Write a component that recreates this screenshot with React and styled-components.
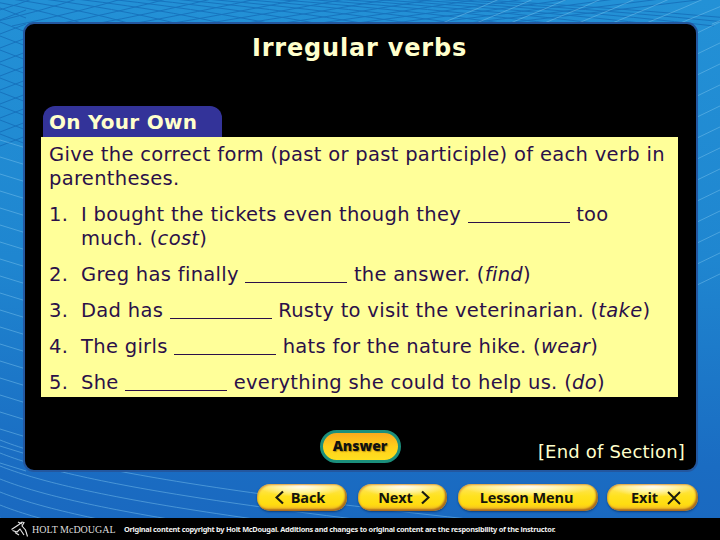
import styled, { createGlobalStyle } from "styled-components";

const GlobalStyle = createGlobalStyle`
  html, body {
    margin: 0;
    padding: 0;
    background: #000;
  }
  body {
    font-family: "DejaVu Sans", Verdana, sans-serif;
  }
`;

const questions = [
  {
    id: 1,
    lines: [
      <>I bought the tickets even though they <Blank /> too</>,
      <>much. (<em>cost</em>)</>,
    ],
  },
  { id: 2, lines: [<>Greg has finally <Blank /> the answer. (<em>find</em>)</>] },
  { id: 3, lines: [<>Dad has <Blank /> Rusty to visit the veterinarian. (<em>take</em>)</>] },
  { id: 4, lines: [<>The girls <Blank /> hats for the nature hike. (<em>wear</em>)</>] },
  { id: 5, lines: [<>She <Blank /> everything she could to help us. (<em>do</em>)</>] },
];

function Blank() {
  return <BlankLine />;
}

const BackgroundLines = () => {
  const light = [];
  // long sweeping lines under the panel
  for (let i = 0; i < 11; i++) {
    const y = 440 + i * 13;
    light.push(`M0 ${y} C 70 ${y + 28}, 240 ${y + 60}, 720 ${y + 104}`);
  }
  // rays in the top right corner and down the right edge
  for (let i = 0; i < 14; i++) {
    const x = 440 + i * 34;
    light.push(`M${x} 24 Q ${x + 40} 8, ${x + 80} -10`);
  }
  for (let i = 0; i < 13; i++) {
    const y = 34 + i * 21;
    light.push(`M695 ${y} L 722 ${y - 13}`);
  }
  for (let i = 0; i < 20; i++) {
    const y = 140 + i * 17;
    light.push(`M0 ${y} L 26 ${y + 8}`);
  }

  const dark = [];
  // mesh along the top and left
  for (let i = 0; i < 16; i++) {
    dark.push(`M${i * 36 - 60} 26 Q ${i * 40} 12, ${i * 46 + 40} -4`);
    dark.push(`M${i * 30 - 40} -4 Q ${i * 40 + 40} 8, ${i * 48 + 90} 26`);
  }
  for (let i = 0; i < 10; i++) {
    dark.push(`M0 ${i * 14 + 20} L 26 ${i * 14 + 10}`);
    dark.push(`M0 ${i * 14 + 8} L 26 ${i * 14 + 18}`);
  }

  return (
    <LinesSvg viewBox="0 0 720 518">
      <defs>
        <radialGradient id="topShade" cx="0.5" cy="0" r="0.5">
          <stop offset="0" stopColor="#0f5fae" stopOpacity="0.95" />
          <stop offset="1" stopColor="#0f5fae" stopOpacity="0" />
        </radialGradient>
      </defs>
      <ellipse cx="330" cy="0" rx="280" ry="18" fill="url(#topShade)" />
      <g fill="none" stroke="#146ab6" strokeWidth="1" opacity="0.75">
        {dark.map((d) => <path key={d} d={d} />)}
      </g>
      <g fill="none" stroke="#7cc4ee" strokeWidth="0.8" opacity="0.6">
        {light.map((d) => <path key={d} d={d} />)}
      </g>
    </LinesSvg>
  );
};

const Chevron = ({ dir }) => (
  <svg width="9" height="15" viewBox="0 0 9 15">
    <path
      d={dir === "left" ? "M8 1.5 L1.5 7.5 L8 13.5" : "M1 1.5 L7.5 7.5 L1 13.5"}
      fill="none"
      stroke="#1a1a10"
      strokeWidth="2.2"
    />
  </svg>
);

const CrossIcon = () => (
  <svg width="14" height="14" viewBox="0 0 14 14">
    <path d="M1 1 L13 13 M13 1 L1 13" fill="none" stroke="#1a1a10" strokeWidth="1.9" />
  </svg>
);

const LogoMark = () => (
  <svg width="18" height="17" viewBox="0 0 18 17">
    <g fill="none" stroke="#e8e8e8" strokeWidth="1.1">
      <path d="M0.5 8.5 L8 3.5 L11 1 L13 1.5 L11 5 L14.5 9 L16.5 15.5" />
      <path d="M1.5 9.5 L6 11 L9 8 L13 14" />
      <path d="M7 1 L11 3" />
      <path d="M4 11.5 L8 14" />
    </g>
  </svg>
);

export default function App() {
  return (
    <>
      <GlobalStyle />
      <Page>
        <Stage>
          <BackgroundLines />
          <Panel>
            <Title>Irregular verbs</Title>
            <Tab>On Your Own</Tab>
            <Card>
              <Intro>
                Give the correct form (past or past participle) of each verb in parentheses.
              </Intro>
              {questions.map((q) => (
                <Question key={q.id}>
                  <Number>{q.id}.</Number>
                  <div>
                    {q.lines.map((line, i) => (
                      <QuestionLine key={i}>{line}</QuestionLine>
                    ))}
                  </div>
                </Question>
              ))}
            </Card>
            <PanelFooter>
              <AnswerButton>Answer</AnswerButton>
              <EndNote>[End of Section]</EndNote>
            </PanelFooter>
          </Panel>
          <NavBar>
            <NavButton $width={90} $inset="0 4px 0 0" $gap={7}><Chevron dir="left" /> Back</NavButton>
            <NavButton $width={89} $inset="0 0 0 3px"  $gap={8}>Next <Chevron dir="right" /></NavButton>
            <NavButton $width={140} $inset="0 3px 0 0">Lesson Menu</NavButton>
            <NavButton $width={91} $pull={2} $inset="0 0 0 7px">Exit <CrossIcon /></NavButton>
          </NavBar>
        </Stage>
        <Footer>
          <LogoMark />
          <Brand>HOLT McDOUGAL</Brand>
          <Legal>
            Original content copyright by Holt McDougal. Additions and changes to original content are the responsibility of the instructor.
          </Legal>
        </Footer>
      </Page>
    </>
  );
}

const Page = styled.div`
  width: 720px;
  height: 540px;
  display: flex;
  flex-direction: column;
  overflow: hidden;
`;

const Stage = styled.div`
  position: relative;
  height: 518px;
  box-sizing: border-box;
  padding: 22px 22px 0 23px;
  background: linear-gradient(180deg, #2391d6 0%, #1f86d0 50%, #1a6cc2 90%, #1a69c0 100%);
`;

const LinesSvg = styled.svg`
  position: absolute;
  inset: 0;
  width: 100%;
  height: 100%;
`;

const Panel = styled.div`
  position: relative;
  box-sizing: border-box;
  width: 675px;
  height: 450px;
  padding: 0 18px 0 16px;
  background: #000;
  border: 2px solid #23579f;
  border-radius: 11px;
`;

const Title = styled.h1`
  margin: 0;
  height: 82px;
  padding-top: 9px;
  box-sizing: border-box;
  text-align: center;
  font-size: 24px;
  line-height: 30px;
  font-weight: 700;
  letter-spacing: 0.8px;
  color: #ffffcc;
`;

const Tab = styled.div`
  box-sizing: border-box;
  width: 179px;
  height: 31px;
  margin-left: 2px;
  padding: 3px 0 0 6px;
  background: #333399;
  border-radius: 12px 12px 0 0;
  font-size: 20px;
  line-height: 27px;
  font-weight: 700;
  letter-spacing: 0.25px;
  color: #ffffcc;
`;

const Card = styled.div`
  box-sizing: border-box;
  width: 637px;
  height: 260px;
  padding: 6px 8px 0;
  background: #ffff99;
  color: #2b1049;
  font-size: 19.5px;
  line-height: 24px;
  letter-spacing: 0.31px;
`;

const Intro = styled.p`
  margin: 0 0 12px;
`;

const Question = styled.div`
  display: flex;
  margin-bottom: 12px;
`;

const Number = styled.span`
  flex: 0 0 32px;
`;

const QuestionLine = styled.div`
  white-space: nowrap;
`;

const BlankLine = styled.span`
  display: inline-block;
  width: 102px;
  height: 17px;
  margin-bottom: -2px;
  border-bottom: 1px solid #2b1049;
  vertical-align: baseline;
`;

const PanelFooter = styled.div`
  position: relative;
  display: flex;
  justify-content: center;
  padding-top: 33px;
`;

const AnswerButton = styled.button`
  box-sizing: border-box;
  width: 81px;
  height: 33px;
  margin-left: 1px;
  padding: 0 0 2px;
  border: 3px solid #1b8f7c;
  border-radius: 17px;
  background: linear-gradient(180deg, #f9a91e 0%, #ffcf1a 50%, #ffe020 100%);
  font-family: "Open Sans", sans-serif;
  font-size: 14px;
  font-weight: 800;
  color: #111;
  text-shadow: 1px 1px 1px rgba(120, 80, 0, 0.5);
`;

const EndNote = styled.div`
  position: absolute;
  right: -7px;
  top: 43px;
  font-size: 18px;
  line-height: 24px;
  letter-spacing: 0.2px;
  color: #ffffcc;
  white-space: nowrap;
`;

const NavBar = styled.div`
  position: relative;
  display: flex;
  gap: 11px;
  margin-top: 12px;
  margin-left: 234px;
`;

const NavButton = styled.button`
  display: flex;
  align-items: center;
  justify-content: center;
  gap: ${(props) => props.$gap || 9}px;
  box-sizing: border-box;
  width: ${(props) => props.$width}px;
  height: 27px;
  margin-left: ${(props) => -(props.$pull || 0)}px;
  padding: ${(props) => props.$inset || 0};
  border: none;
  border-radius: 13px;
  background:
    radial-gradient(ellipse 48% 42% at 50% 6%, #ffffff 0%, rgba(255, 250, 200, 0.7) 55%, rgba(255, 248, 190, 0) 100%),
    linear-gradient(180deg, #ffe56a 0%, #ffe21f 45%, #ffdc10 75%, #f2b52a 100%);
  box-shadow: inset -2px -2px 2px #a8691f, inset 1px 1px 2px #d99a35, 0 1px 2px #0b3f80;
  font-family: "Open Sans", sans-serif;
  font-size: 14.5px;
  font-weight: 700;
  letter-spacing: -0.1px;
  color: #14140c;
`;

const Footer = styled.div`
  display: flex;
  align-items: center;
  height: 22px;
  padding-left: 11px;
  background: #000;
`;

const Brand = styled.span`
  margin-left: 3px;
  width: 92px;
  font-family: "Liberation Serif", serif;
  font-size: 10px;
  color: #ddd;
  white-space: nowrap;
`;

const Legal = styled.span`
  font-family: "Noto Sans", sans-serif;
  font-size: 7.4px;
  font-weight: 700;
  letter-spacing: -0.28px;
  color: #f0f0f0;
  white-space: nowrap;
`;
